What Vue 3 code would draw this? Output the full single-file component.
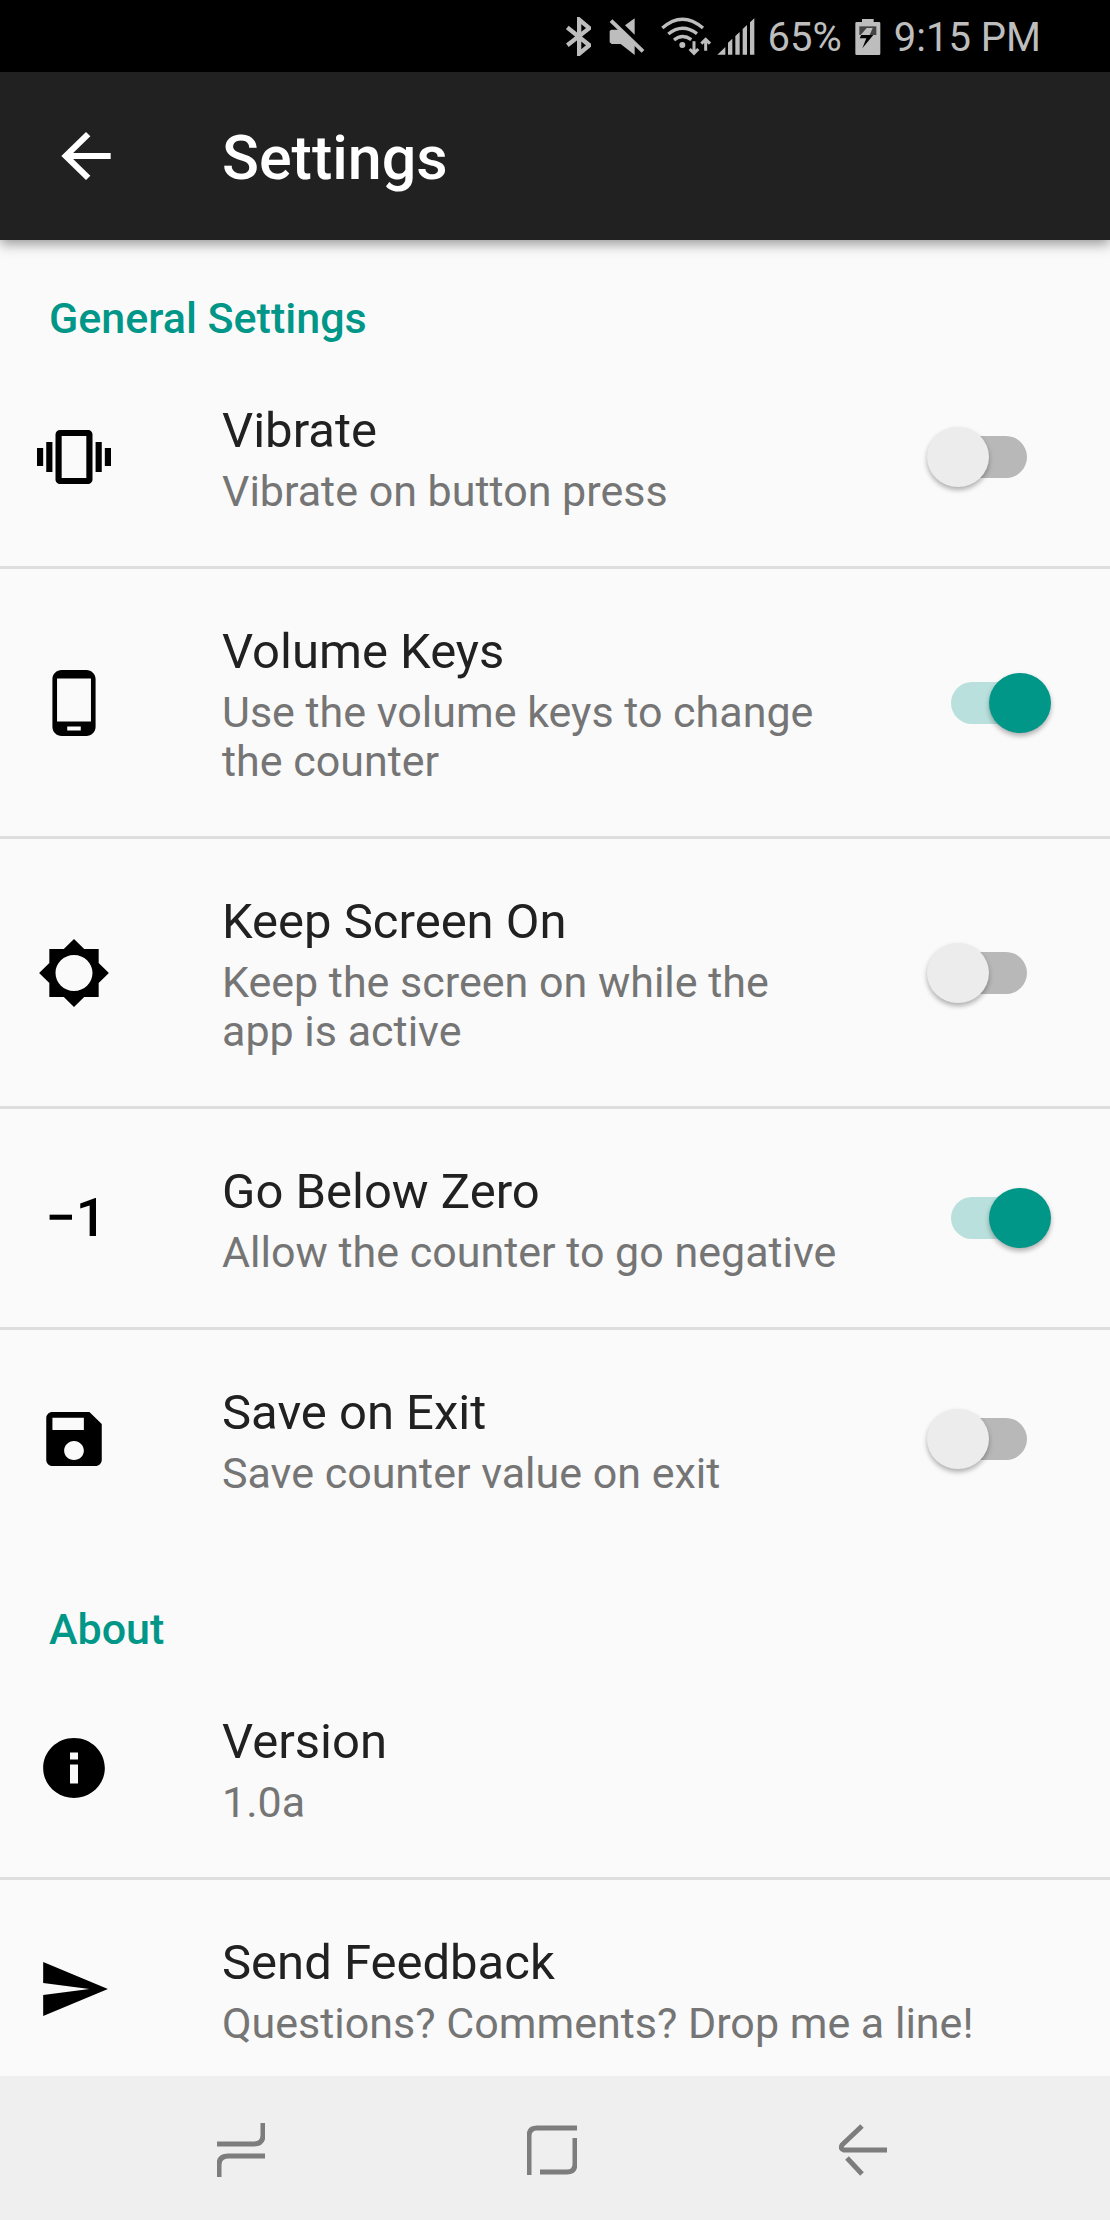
<template>
  <div class="screen">
    <div class="status-bar">
      <svg class="status-icon bluetooth" width="25" height="39" viewBox="50 49 76 117">
        <path d="M54 80L121 134L90 160V56L121 82L54 134" fill="none" stroke="currentColor" stroke-width="13" />
      </svg>
      <svg class="status-icon" width="36" height="39" viewBox="179 49 108 117">
        <path d="M181 91l5-4h28l42 42v34l-42-33h-27l-6-5zM227 74l29-21v49z" fill="currentColor" />
        <path d="M185 60L281 152" stroke="currentColor" stroke-width="12" />
      </svg>
      <div class="network">
        <svg class="status-icon" width="51" height="39" viewBox="334 47 153 117">
          <g fill="none" stroke="currentColor" stroke-width="10">
            <path d="M338 80Q398 27 460 80" />
            <path d="M356 98Q398 64 442 97" />
            <path d="M373 116Q398 96 425 115" />
            <path d="M433 120v34M420 143l13 13 13-13M468 148v-34M455 127l13-13 13 13" stroke-width="9" />
          </g>
          <circle cx="398" cy="131" r="9" fill="currentColor" />
        </svg>
        <svg class="status-icon" width="38" height="39" viewBox="502 47 114 117">
          <path
            d="M503 160l24-23v23zM535 160v-36l13-12v48zM557 160v-56l13-12v68zM579 160v-77l13-12v89zM601 160v-97l13-12v109z"
            fill="currentColor"
          />
        </svg>
      </div>
      <span class="status-text">65%</span>
      <svg class="status-icon" width="26" height="39" viewBox="914 49 78 117">
        <path d="M915 68q0-4 4-4h16v-9h35v9h16q4 0 4 4v91q0 4-4 4h-67q-4 0-4-4z" fill="currentColor" />
        <path d="M927 77h51v26h-51z" fill="#444" />
        <path d="M949 82h18l-9 21h-27z" fill="currentColor" />
        <path d="M928 113l5-10h36l-33 40 12-30z" fill="#000" />
      </svg>
      <span class="status-text">9:15 PM</span>
    </div>

    <header class="toolbar">
      <button class="back-button" type="button" aria-label="Back">
        <svg class="icon" viewBox="0 0 24 24" preserveAspectRatio="none">
          <path d="M20 11H7.83l5.59-5.59L12 4l-8 8 8 8 1.41-1.41L7.83 13H20v-2z" />
        </svg>
      </button>
      <h1 class="toolbar-title">Settings</h1>
    </header>

    <main class="content">
      <section>
        <h2 class="section-title">General Settings</h2>
        <label v-for="item in settings" :key="item.id" class="row" :for="item.id">
          <span class="row-icon">
            <svg v-if="item.icon" class="icon" viewBox="0 0 24 24" preserveAspectRatio="none">
              <path :d="item.icon" />
            </svg>
            <span v-else class="number-icon">{{ item.symbol }}</span>
          </span>
          <span class="row-text">
            <span class="row-title">{{ item.title }}</span>
            <span class="row-summary">{{ item.summary }}</span>
          </span>
          <input :id="item.id" v-model="item.enabled" class="switch" type="checkbox" role="switch" />
        </label>
      </section>

      <section>
        <h2 class="section-title">About</h2>
        <component
          :is="item.href ? 'a' : 'div'"
          v-for="item in about"
          :key="item.title"
          class="row"
          :href="item.href"
        >
          <span class="row-icon">
            <svg class="icon" viewBox="0 0 24 24" preserveAspectRatio="none">
              <path :d="item.icon" />
            </svg>
          </span>
          <span class="row-text">
            <span class="row-title">{{ item.title }}</span>
            <span class="row-summary">{{ item.summary }}</span>
          </span>
        </component>
      </section>
    </main>

    <nav class="nav-bar">
      <button class="nav-button" type="button" aria-label="Recent apps">
        <svg width="48" height="54" viewBox="0 0 48 54">
          <path d="M0 21H37Q46 21 46 12V0M48 33H11Q2 33 2 42V54" />
        </svg>
      </button>
      <button class="nav-button" type="button" aria-label="Home">
        <svg width="50" height="50" viewBox="0 0 50 50">
          <path d="M2 50V11Q2 3 10 3H50M48 13V39Q48 47 40 47H13" />
        </svg>
      </button>
      <button class="nav-button" type="button" aria-label="Back">
        <svg width="48" height="52" viewBox="0 0 48 52">
          <path d="M48 26H5Q1 25 3 21L23 2M8 34L23 50" />
        </svg>
      </button>
    </nav>
  </div>
</template>

<script setup>
import { ref } from 'vue';

const settings = ref([
  {
    id: 'vibrate',
    title: 'Vibrate',
    summary: 'Vibrate on button press',
    enabled: false,
    icon: 'M0 15h2V9H0v6zm3 2h2V7H3v10zm19-8v6h2V9h-2zm-3 8h2V7h-2v10zM16.5 3h-9C6.67 3 6 3.67 6 4.5v15c0 .83.67 1.5 1.5 1.5h9c.83 0 1.5-.67 1.5-1.5v-15c0-.83-.67-1.5-1.5-1.5zM16 19H8V5h8v14z'
  },
  {
    id: 'volume-keys',
    title: 'Volume Keys',
    summary: 'Use the volume keys to change the counter',
    enabled: true,
    icon: 'M16 1H8C6.34 1 5 2.34 5 4v16c0 1.66 1.34 3 3 3h8c1.66 0 3-1.34 3-3V4c0-1.66-1.34-3-3-3zm-1.8 20.2H9.8v-1.4h4.4v1.4zm3.3-3H6.5V3.8h11v14.4z'
  },
  {
    id: 'keep-screen-on',
    title: 'Keep Screen On',
    summary: 'Keep the screen on while the app is active',
    enabled: false,
    icon: 'M20 15.31L23.31 12 20 8.69V4h-4.69L12 .69 8.69 4H4v4.69L.69 12 4 15.31V20h4.69L12 23.31 15.31 20H20v-4.69zM12 18c-3.31 0-6-2.69-6-6s2.69-6 6-6 6 2.69 6 6-2.69 6-6 6z'
  },
  {
    id: 'below-zero',
    title: 'Go Below Zero',
    summary: 'Allow the counter to go negative',
    enabled: true,
    symbol: '−1'
  },
  {
    id: 'save-on-exit',
    title: 'Save on Exit',
    summary: 'Save counter value on exit',
    enabled: false,
    icon: 'M17 3H5c-1.11 0-2 .9-2 2v14c0 1.1.89 2 2 2h14c1.1 0 2-.9 2-2V7l-4-4zm-5 16c-1.81 0-3.2-1.4-3.2-3.1s1.39-3.2 3.2-3.2 3.2 1.5 3.2 3.2-1.39 3.1-3.2 3.1zm3.2-10H5V4.9h10.2V9z'
  }
]);

const about = [
  {
    title: 'Version',
    summary: '1.0a',
    icon: 'M12 2C6.48 2 2 6.48 2 12s4.48 10 10 10 10-4.48 10-10S17.52 2 12 2zm1.3 15.2h-2.6v-6.4h2.6v6.4zm0-8h-2.6V6.8h2.6v2.4z'
  },
  {
    title: 'Send Feedback',
    summary: 'Questions? Comments? Drop me a line!',
    href: '#feedback',
    icon: 'M2.01 21L23 12 2.01 3 2 10l15 2-15 2z'
  }
];
</script>

<style>
body {
  margin: 0;
  background: #fafafa;
}
</style>

<style scoped>
.screen {
  display: flex;
  flex-direction: column;
  height: 100vh;
  background: #fafafa;
  color: #212121;
  font-family: Roboto, 'Noto Sans', sans-serif;
}

.status-bar {
  display: flex;
  flex-shrink: 0;
  align-items: center;
  justify-content: flex-end;
  gap: 13px;
  height: 72px;
  padding-right: 69px;
  background: #000;
  color: #bdbdbd;
  font-size: 40px;
  line-height: 48px;
}

.status-icon {
  display: block;
}

.status-text {
  padding-top: 4px;
}

.bluetooth {
  margin-right: 5px;
}

.network {
  display: flex;
  gap: 5px;
  margin-left: 3px;
}

.toolbar {
  position: relative;
  display: flex;
  flex-shrink: 0;
  align-items: center;
  height: 168px;
  padding-left: 49px;
  background: #212121;
  color: #fff;
  box-shadow: 0 4px 12px rgba(0, 0, 0, 0.4);
}

.back-button {
  width: 173px;
  padding: 0;
  border: none;
  background: none;
  color: inherit;
  text-align: left;
  cursor: pointer;
}

.icon {
  display: block;
  width: 74px;
  height: 72px;
  fill: currentColor;
}

.toolbar-title {
  margin: 0;
  padding-top: 4px;
  font-size: 61px;
  font-weight: 500;
  line-height: 72px;
}

/* 内容区可滚动，隐藏滚动条 */
.content {
  flex: 1;
  min-height: 0;
  overflow-y: auto;
  scrollbar-width: none;
}

.section-title {
  margin: 0;
  padding: 54px 49px 5px;
  color: #009688;
  font-size: 43px;
  font-weight: 500;
  line-height: 49px;
}

.row {
  display: flex;
  align-items: center;
  padding: 50px 59px 50px 37px;
  border-bottom: 3px solid #dedede;
  color: inherit;
  text-decoration: none;
}

.row:last-child {
  border-bottom-color: transparent;
}

.row-icon {
  flex: 0 0 185px;
  color: #000;
}

.number-icon {
  display: block;
  width: 78px;
  font-size: 54px;
  font-weight: 500;
  line-height: 72px;
  text-align: center;
}

.row-text {
  display: flex;
  flex: 1;
  flex-direction: column;
  gap: 3px;
}

.row-title {
  font-size: 49px;
  line-height: 66px;
}

.row-summary {
  color: #757575;
  font-size: 43px;
  line-height: 49px;
}

.switch {
  position: relative;
  flex-shrink: 0;
  width: 124px;
  height: 60px;
  margin: 0 0 0 84px;
  appearance: none;
  cursor: pointer;
}

.switch::before {
  content: '';
  position: absolute;
  top: 9px;
  left: 24px;
  width: 76px;
  height: 42px;
  border-radius: 21px;
  background: #b8b8b8;
}

.switch::after {
  content: '';
  position: absolute;
  top: 0;
  left: 0;
  width: 62px;
  height: 60px;
  border-radius: 50%;
  background: #ececec;
  box-shadow: 0 3px 5px rgba(0, 0, 0, 0.3);
}

.switch:checked::before {
  background: #b9e0dc;
}

.switch:checked::after {
  left: 62px;
  background: #009688;
}

.nav-bar {
  display: grid;
  flex-shrink: 0;
  grid-template-columns: repeat(3, 1fr);
  box-sizing: border-box;
  height: 144px;
  padding: 4px 91px 0 85px;
  background: #efefef;
}

.nav-button {
  display: flex;
  align-items: center;
  justify-content: center;
  padding: 0;
  border: none;
  background: none;
  cursor: pointer;
}

.nav-button path {
  fill: none;
  stroke: #7d7d7d;
  stroke-width: 5;
}
</style>
